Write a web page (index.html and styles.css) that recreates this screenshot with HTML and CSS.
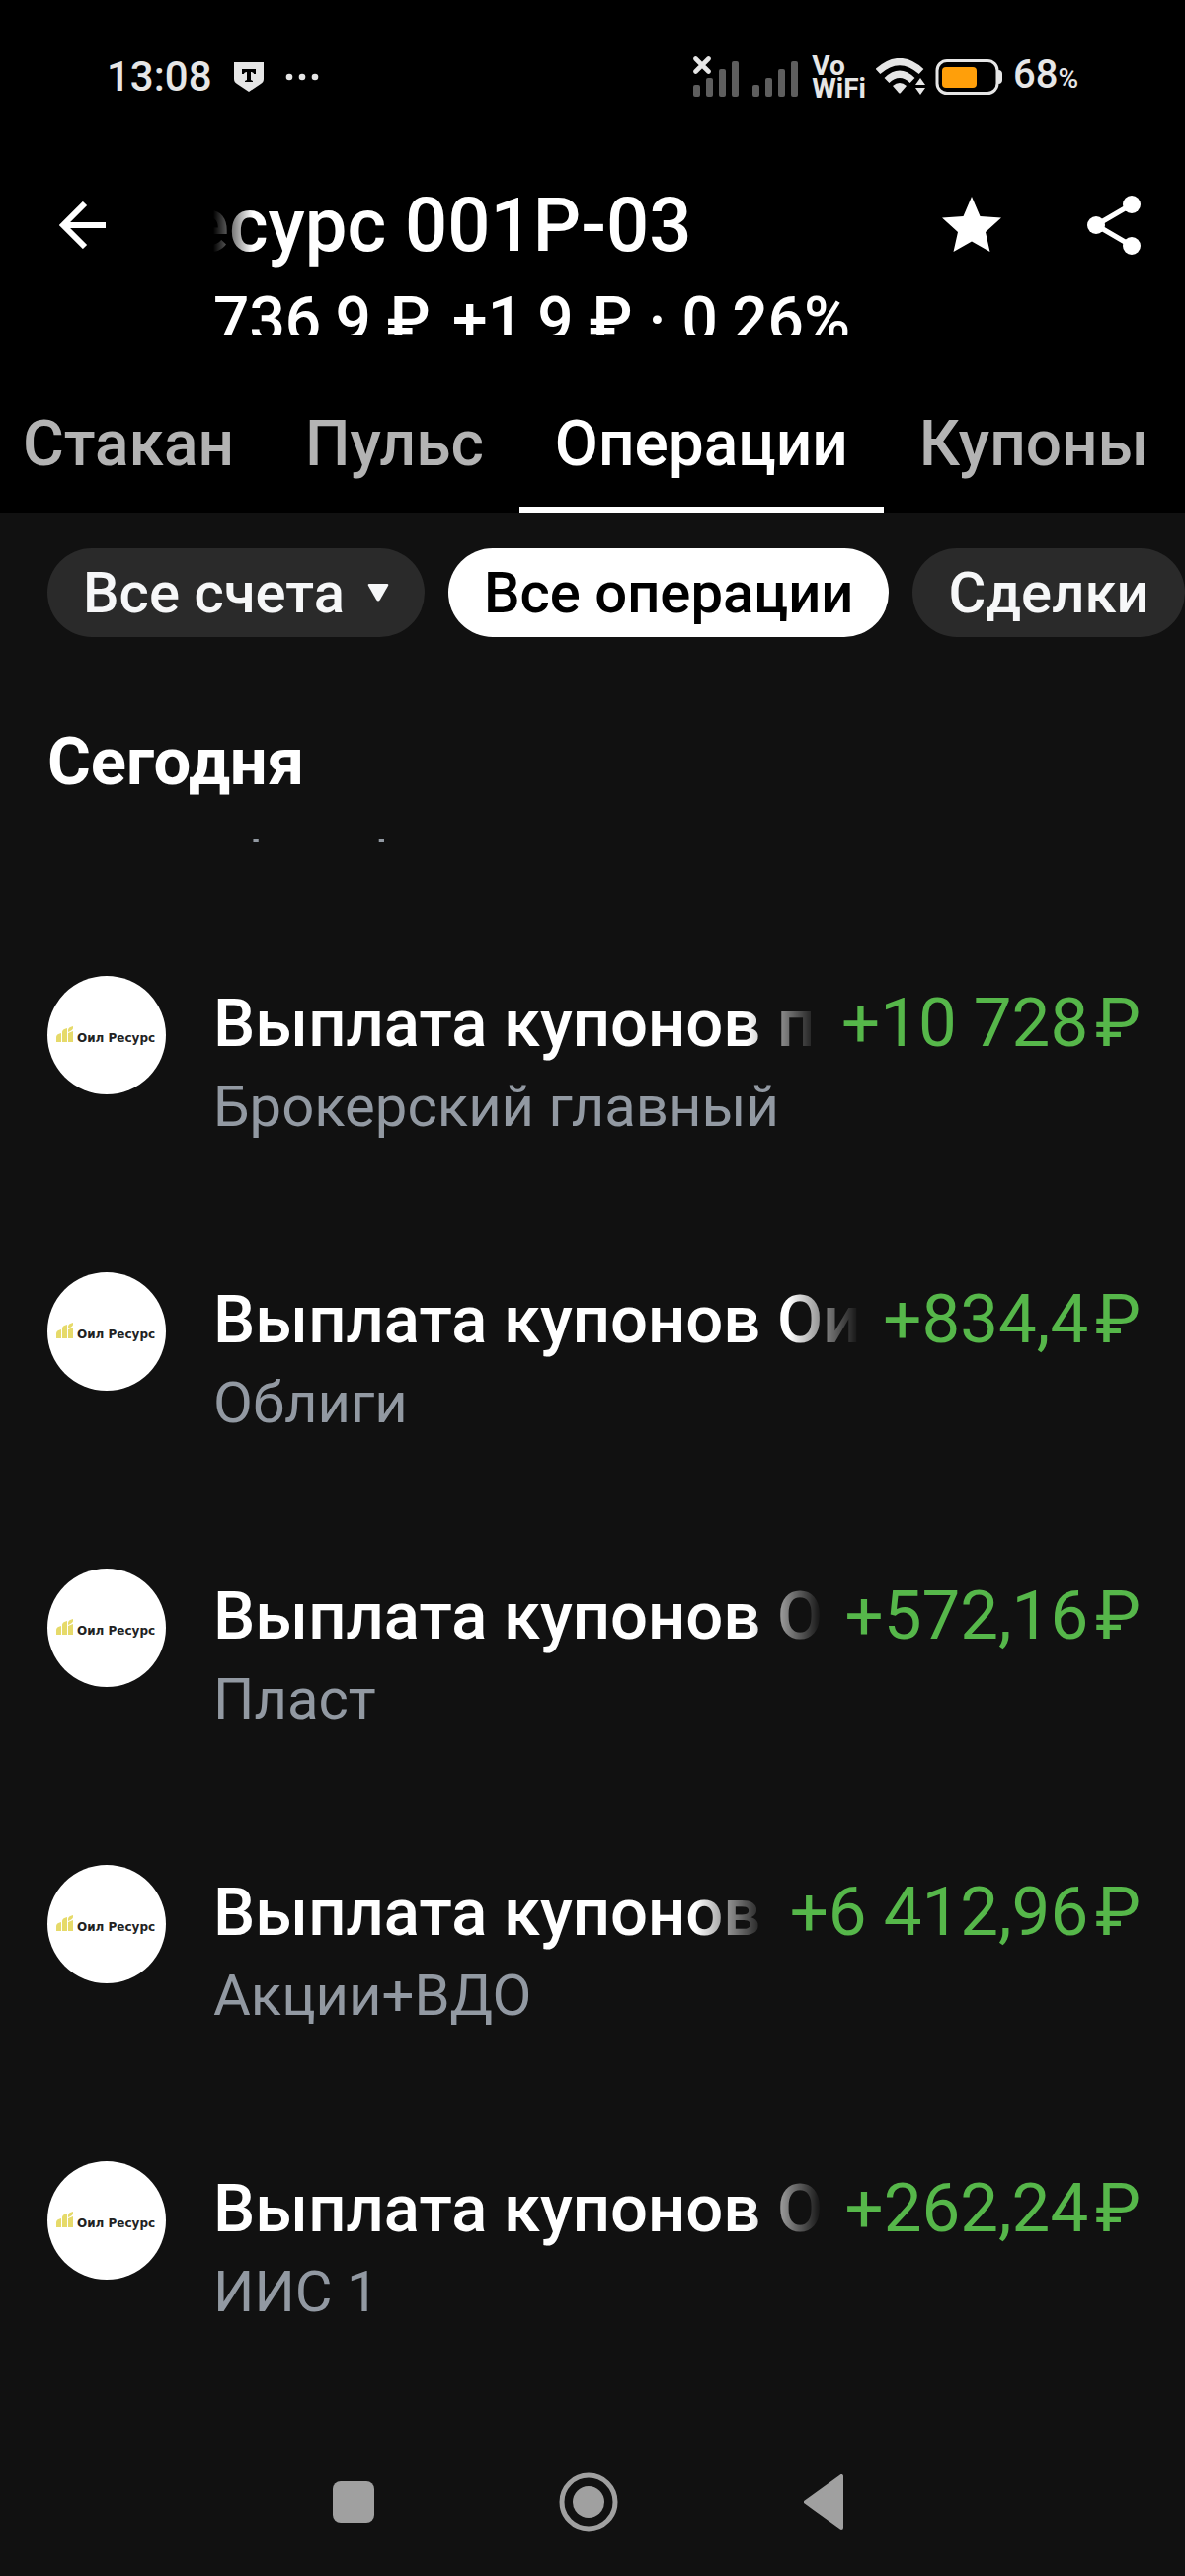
FILE: index.html
```html
<!DOCTYPE html>
<html lang="ru">
<head>
    <meta charset="UTF-8">
    <meta name="viewport" content="width=device-width, initial-scale=1.0">
    <title>Оил Ресурс 001P-03 – Операции</title>
    <link rel="stylesheet" href="styles.css">
</head>
<body>
    <!-- logo shared by all operations -->
    <svg class="sprite" aria-hidden="true">
        <symbol id="oil-logo" viewBox="0 0 120 120">
            <circle cx="60" cy="60" r="60" fill="#fff"/>
            <path fill="#e6da6a" d="M9 67v-5q0-3 5-4v9zM15 67v-10q0-3 5-4v14zM21 67v-9l5-2v11zM21 55q0-3 5-4v2q0 2-5 4z"/>
            <text class="logo-text" x="30" y="67">Оил Ресурс</text>
        </symbol>
    </svg>

    <header class="header">
        <div class="status-bar">
            <div class="status-left">
                <span class="clock">13:08</span>
                <svg width="30" height="30" viewBox="0 0 30 30">
                    <path fill="#e6e6e6" d="M0 0h30v17c0 2-1 4-3 5L15 30 3 22c-2-1-3-3-3-5z"/>
                    <path fill="#000" d="M8 7h14v5h-2c0-1-1-2-3-2v8l2 1v1h-8v-1l2-1v-8c-2 0-3 1-3 2H8z"/>
                </svg>
                <svg width="34" height="8" viewBox="0 0 34 8" fill="#e6e6e6">
                    <circle cx="4" cy="4" r="3.3"/>
                    <circle cx="17" cy="4" r="3.3"/>
                    <circle cx="30" cy="4" r="3.3"/>
                </svg>
            </div>
            <div class="status-right">
                <svg class="signal" width="106" height="42" viewBox="0 0 106 42">
                    <g fill="#5e5e5e">
                        <rect x="0" y="29" width="7" height="12" rx="2"/>
                        <rect x="13" y="22" width="7" height="19" rx="2"/>
                        <rect x="26" y="13" width="7" height="28" rx="2"/>
                        <rect x="39" y="5" width="7" height="36" rx="2"/>
                        <rect x="60" y="29" width="7" height="12" rx="2"/>
                        <rect x="73" y="22" width="7" height="19" rx="2"/>
                        <rect x="86" y="13" width="7" height="28" rx="2"/>
                        <rect x="99" y="5" width="7" height="36" rx="2"/>
                    </g>
                    <path d="M2.500 2.500L15.500 15.500M15.500 2.500L2.500 15.500" stroke="#e6e6e6" stroke-width="4.600" stroke-linecap="round"/>
                </svg>
                <span class="vowifi">Vo<br>WiFi</span>
                <svg width="50" height="38" viewBox="0 0 50 38">
                    <g fill="none" stroke="#e6e6e6" stroke-width="7">
                        <path d="M2 13.500Q24 -6.500 46 13.500"/>
                        <path d="M11 22.500Q24 10 37 22.500"/>
                    </g>
                    <path fill="#e6e6e6" d="M17 28q7-6 14 0l-6 7q-1 1-2 0z"/>
                    <path fill="#e6e6e6" d="M40 27l5-7 5 7zM40 30h10l-5 7z"/>
                </svg>
                <svg width="69" height="36" viewBox="0 0 69 36">
                    <rect x="2" y="1.500" width="61" height="33" rx="10" fill="none" stroke="#e6e6e6" stroke-width="3"/>
                    <rect x="7" y="8" width="35" height="21" rx="4" fill="#ff9f0a"/>
                    <path fill="#e6e6e6" d="M64 11c3 0 4 2 4 4v6c0 2-1 4-4 4z"/>
                </svg>
                <span class="charge">68<small>%</small></span>
            </div>
        </div>

        <div class="title-bar">
            <button class="icon-button" type="button" aria-label="Назад">
                <svg width="48" height="48" viewBox="0 0 48 48" fill="none" stroke="#fff" stroke-width="6">
                    <path d="M47 24H4M26 2L4 24l22 22"/>
                </svg>
            </button>
            <div class="title-clip">
                <h1 class="title">Оил Ресурс 001P-03</h1>
            </div>
            <button class="icon-button" type="button" aria-label="В избранное">
                <svg width="60" height="60" viewBox="0 0 60 60" fill="#fff">
                    <path d="M30 1l8.500 20L60 22.500 44 37l4.500 20L30 46.500 11.500 57 16 37 0 22.500 21.500 21z"/>
                </svg>
            </button>
            <button class="icon-button" type="button" aria-label="Поделиться">
                <svg width="54" height="60" viewBox="0 0 54 60" fill="#fff">
                    <path d="M9 30L45 9M9 30l36 21" stroke="#fff" stroke-width="5"/>
                    <circle cx="9" cy="30" r="9"/>
                    <circle cx="45" cy="9" r="9"/>
                    <circle cx="45" cy="51" r="9"/>
                </svg>
            </button>
        </div>
        <div class="price">736,9 ₽ &#8202;+1,9 ₽ · 0,26%</div>

        <nav class="tabs">
            <a class="tab" href="#book">Стакан</a>
            <a class="tab" href="#pulse">Пульс</a>
            <a class="tab tab-active" href="#operations">Операции</a>
            <a class="tab" href="#coupons">Купоны</a>
        </nav>
    </header>

    <main class="operations" id="operations">
        <div class="filters">
            <button class="chip" type="button" aria-haspopup="listbox">
                Все счета
                <svg width="22" height="18" viewBox="0 0 22 18" fill="#f6f7f8">
                    <path d="M2 0h18q2 0 1 2l-8 14q-2 3-4 0L1 2Q0 0 2 0z"/>
                </svg>
            </button>
            <button class="chip chip-active" type="button">Все операции</button>
            <button class="chip" type="button">Сделки</button>
        </div>

        <h2 class="day">Сегодня</h2>

        <ul class="list">
            <li class="operation operation-scrolled">
                <svg class="logo"><use href="#oil-logo"/></svg>
                <div class="info">
                    <div class="line">
                        <span class="name">Выплата купонов</span>
                    </div>
                    <div class="account">Брокерский главный</div>
                </div>
            </li>
            <li class="operation">
                <svg class="logo"><use href="#oil-logo"/></svg>
                <div class="info">
                    <div class="line">
                        <span class="name">Выплата купонов п</span>
                        <span class="amount">+10 728&#8202;₽</span>
                    </div>
                    <div class="account">Брокерский главный</div>
                </div>
            </li>
            <li class="operation">
                <svg class="logo"><use href="#oil-logo"/></svg>
                <div class="info">
                    <div class="line">
                        <span class="name">Выплата купонов Ои</span>
                        <span class="amount">+834,4&#8202;₽</span>
                    </div>
                    <div class="account">Облиги</div>
                </div>
            </li>
            <li class="operation">
                <svg class="logo"><use href="#oil-logo"/></svg>
                <div class="info">
                    <div class="line">
                        <span class="name">Выплата купонов О</span>
                        <span class="amount">+572,16&#8202;₽</span>
                    </div>
                    <div class="account">Пласт</div>
                </div>
            </li>
            <li class="operation">
                <svg class="logo"><use href="#oil-logo"/></svg>
                <div class="info">
                    <div class="line">
                        <span class="name">Выплата купонов</span>
                        <span class="amount">+6 412,96&#8202;₽</span>
                    </div>
                    <div class="account">Акции+ВДО</div>
                </div>
            </li>
            <li class="operation">
                <svg class="logo"><use href="#oil-logo"/></svg>
                <div class="info">
                    <div class="line">
                        <span class="name">Выплата купонов О</span>
                        <span class="amount">+262,24&#8202;₽</span>
                    </div>
                    <div class="account">ИИС 1</div>
                </div>
            </li>
        </ul>
    </main>

    <footer class="system-nav">
        <button class="nav-button" type="button" aria-label="Недавние">
            <svg width="42" height="50" viewBox="0 0 42 50"><rect y="4" width="42" height="42" rx="8" fill="#a0a0a0"/></svg>
        </button>
        <button class="nav-button" type="button" aria-label="Домой">
            <svg width="60" height="60" viewBox="0 0 60 60">
                <circle cx="30" cy="30" r="27" fill="none" stroke="#a0a0a0" stroke-width="5"/>
                <circle cx="30" cy="30" r="16" fill="#a0a0a0"/>
            </svg>
        </button>
        <button class="nav-button" type="button" aria-label="Назад">
            <svg width="40" height="56" viewBox="0 0 40 56">
                <path fill="#a0a0a0" stroke="#a0a0a0" stroke-width="4" stroke-linejoin="round" d="M38 2v52L2 28z"/>
            </svg>
        </button>
    </footer>
</body>
</html>
```
FILE: styles.css
```css
* {
    box-sizing: border-box;
}

body {
    margin: 0;
    min-height: 100vh;
    display: flex;
    flex-direction: column;
    background-color: #111111;
    color: #ffffff;
    font-family: Roboto, "Liberation Sans", sans-serif;
    overflow-x: hidden;
}

button {
    padding: 0;
    border: 0;
    background: none;
    color: inherit;
    font: inherit;
}

svg {
    display: block;
    flex-shrink: 0;
}

.sprite {
    position: absolute;
    width: 0;
    height: 0;
}

.header {
    background-color: #000000;
    overflow: hidden;
}

/* status bar */
.status-bar {
    display: flex;
    justify-content: space-between;
    align-items: center;
    height: 156px;
    padding: 0 108px;
    color: #e6e6e6;
}

.status-left,
.status-right {
    display: flex;
    align-items: center;
}

.status-left {
    gap: 22px;
}

.clock {
    font-size: 42px;
    line-height: 48px;
    font-weight: 500;
}

.status-right {
    gap: 10px;
}

.signal {
    margin-right: 4px;
}

.vowifi {
    font-size: 28px;
    line-height: 23px;
    font-weight: 700;
}

.charge {
    font-size: 40px;
    line-height: 48px;
    font-weight: 500;
}

.charge small {
    font-size: 28px;
}

/* title */
.title-bar {
    display: flex;
    align-items: center;
    height: 131px;
    padding: 13px 24px 0 36px;
}

.icon-button {
    display: flex;
    justify-content: center;
    align-items: center;
    width: 96px;
    height: 96px;
}

.icon-button + .icon-button {
    margin-left: 48px;
}

.title-clip {
    flex: 1;
    margin-left: 84px;
    overflow: hidden;
    mask-image: linear-gradient(to right, transparent, #000 40px);
}

.title {
    margin: 0 0 0 -231px;
    font-size: 76px;
    line-height: 96px;
    font-weight: 500;
    white-space: nowrap;
}

.price {
    height: 52px;
    margin: 0 48px 0 216px;
    overflow: hidden;
    font-size: 64px;
    line-height: 76px;
    font-weight: 500;
    white-space: nowrap;
}

/* tabs */
.tabs {
    display: flex;
    margin: 60px 0 0 -13px;
}

.tab {
    padding: 13px 36px 25px;
    border-bottom: 6px solid transparent;
    color: #b3b3b3;
    font-size: 64px;
    line-height: 76px;
    font-weight: 500;
    text-decoration: none;
    white-space: nowrap;
}

.tab-active {
    border-bottom-color: #ffffff;
    color: #ffffff;
}

/* filters */
.filters {
    display: flex;
    gap: 24px;
    padding: 36px 0 0 48px;
    overflow: hidden;
}

.chip {
    display: flex;
    align-items: center;
    flex-shrink: 0;
    gap: 23px;
    height: 90px;
    padding: 0 36px;
    border-radius: 45px;
    background-color: #2a2a2a;
    color: #f6f7f8;
    font-size: 58px;
    font-weight: 500;
    white-space: nowrap;
}

.chip-active {
    background-color: #ffffff;
    color: #000000;
}

/* operations */
.day {
    margin: 0;
    padding: 86px 48px 38px;
    font-size: 67px;
    line-height: 80px;
    font-weight: 700;
}

.list {
    margin: 0;
    padding: 0;
    list-style: none;
    overflow: hidden;
}

.operation {
    display: flex;
    gap: 48px;
    height: 300px;
    padding: 90px 45px 0 48px;
}

/* first row is scrolled under the day header */
.operation-scrolled {
    margin-top: -251px;
}

.logo {
    width: 120px;
    height: 120px;
}

.logo-text {
    fill: #222222;
    font-family: "DejaVu Sans", sans-serif;
    font-size: 12px;
    font-weight: 700;
}

.info {
    flex: 1;
    min-width: 0;
    padding-top: 8px;
}

.line {
    display: flex;
    gap: 24px;
    font-size: 67px;
    line-height: 80px;
    white-space: nowrap;
}

.name {
    flex: 1;
    min-width: 0;
    overflow: hidden;
    font-weight: 500;
    mask-image: linear-gradient(to left, transparent, #000 72px);
}

.amount {
    color: #56b74a;
    font-size: 69px;
}

.account {
    margin-top: 10px;
    color: #9299a2;
    font-size: 58px;
    line-height: 68px;
}

/* system navigation */
.system-nav {
    display: flex;
    justify-content: center;
    gap: 142px;
    margin-top: auto;
    padding: 0 8px 27px 0;
}

.nav-button {
    display: flex;
    justify-content: center;
    align-items: center;
    width: 96px;
    height: 96px;
}
```
